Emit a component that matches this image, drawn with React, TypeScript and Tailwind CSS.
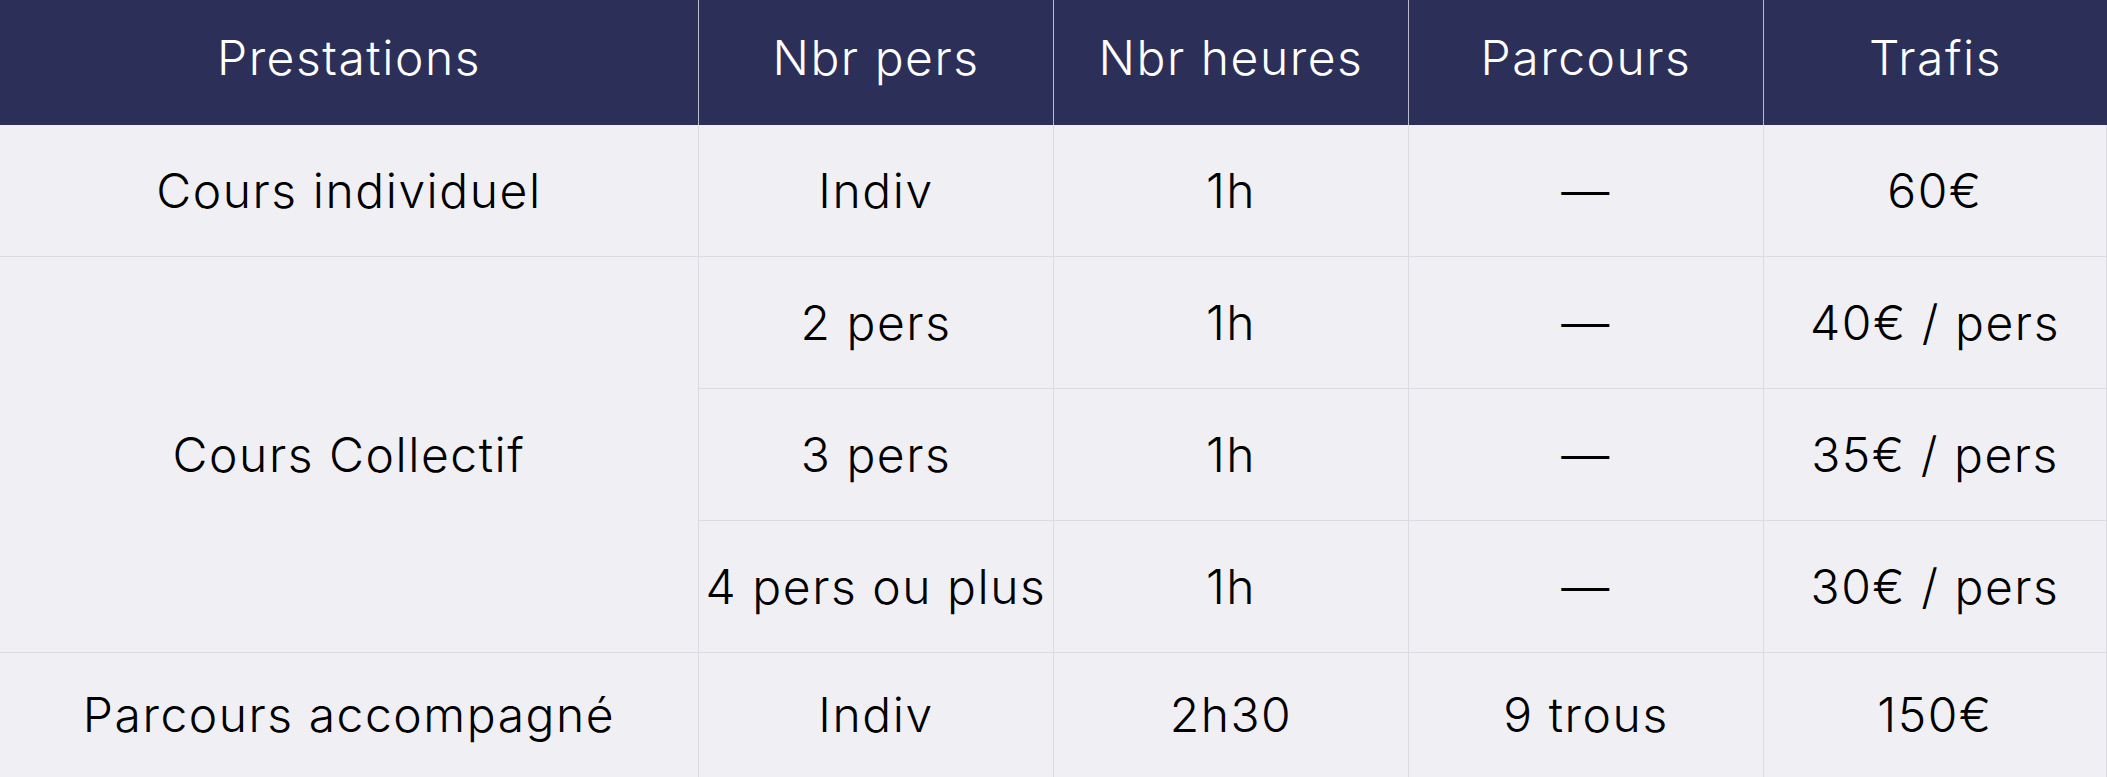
const headers = ['Prestations', 'Nbr pers', 'Nbr heures', 'Parcours', 'Trafis']

const collectif = [
  { pers: '2 pers', prix: '40€ / pers' },
  { pers: '3 pers', prix: '35€ / pers' },
  { pers: '4 pers ou plus', prix: '30€ / pers' },
]

function Cell({ children, className = '' }: { children: React.ReactNode; className?: string }) {
  return (
    <div
      className={`flex items-center justify-center whitespace-nowrap border-r border-b border-[#dcdbe1] text-black ${className}`}
    >
      {children}
    </div>
  )
}

export default function App() {
  return (
    <div
      className="h-[777px] w-[2107px] overflow-hidden bg-[#f0eff4] text-[48px] leading-none font-[350] tracking-[0.032em]"
      style={{ fontFamily: 'Inter, "Open Sans", sans-serif' }}
    >
      <div className="grid grid-cols-[699px_355px_355px_355px_1fr] grid-rows-[125px_132px_132px_132px_132px_124px]">
        {headers.map((h, i) => (
          <div
            key={h}
            className={`flex items-center justify-center bg-[#2c3059] pb-[10px] text-white ${i < 4 ? 'border-r border-[#b9bbcc]' : ''}`}
          >
            {h}
          </div>
        ))}

        <Cell>Cours individuel</Cell>
        <Cell>Indiv</Cell>
        <Cell>1h</Cell>
        <Cell>—</Cell>
        <Cell>60€</Cell>

        <Cell className="row-span-3">Cours Collectif</Cell>
        {collectif.map((r) => (
          <div key={r.pers} className="contents">
            <Cell>{r.pers}</Cell>
            <Cell>1h</Cell>
            <Cell>—</Cell>
            <Cell>{r.prix}</Cell>
          </div>
        ))}

        <Cell className="border-b-0">Parcours accompagné</Cell>
        <Cell className="border-b-0">Indiv</Cell>
        <Cell className="border-b-0">2h30</Cell>
        <Cell className="border-b-0">9 trous</Cell>
        <Cell className="border-b-0">150€</Cell>
      </div>
    </div>
  )
}
